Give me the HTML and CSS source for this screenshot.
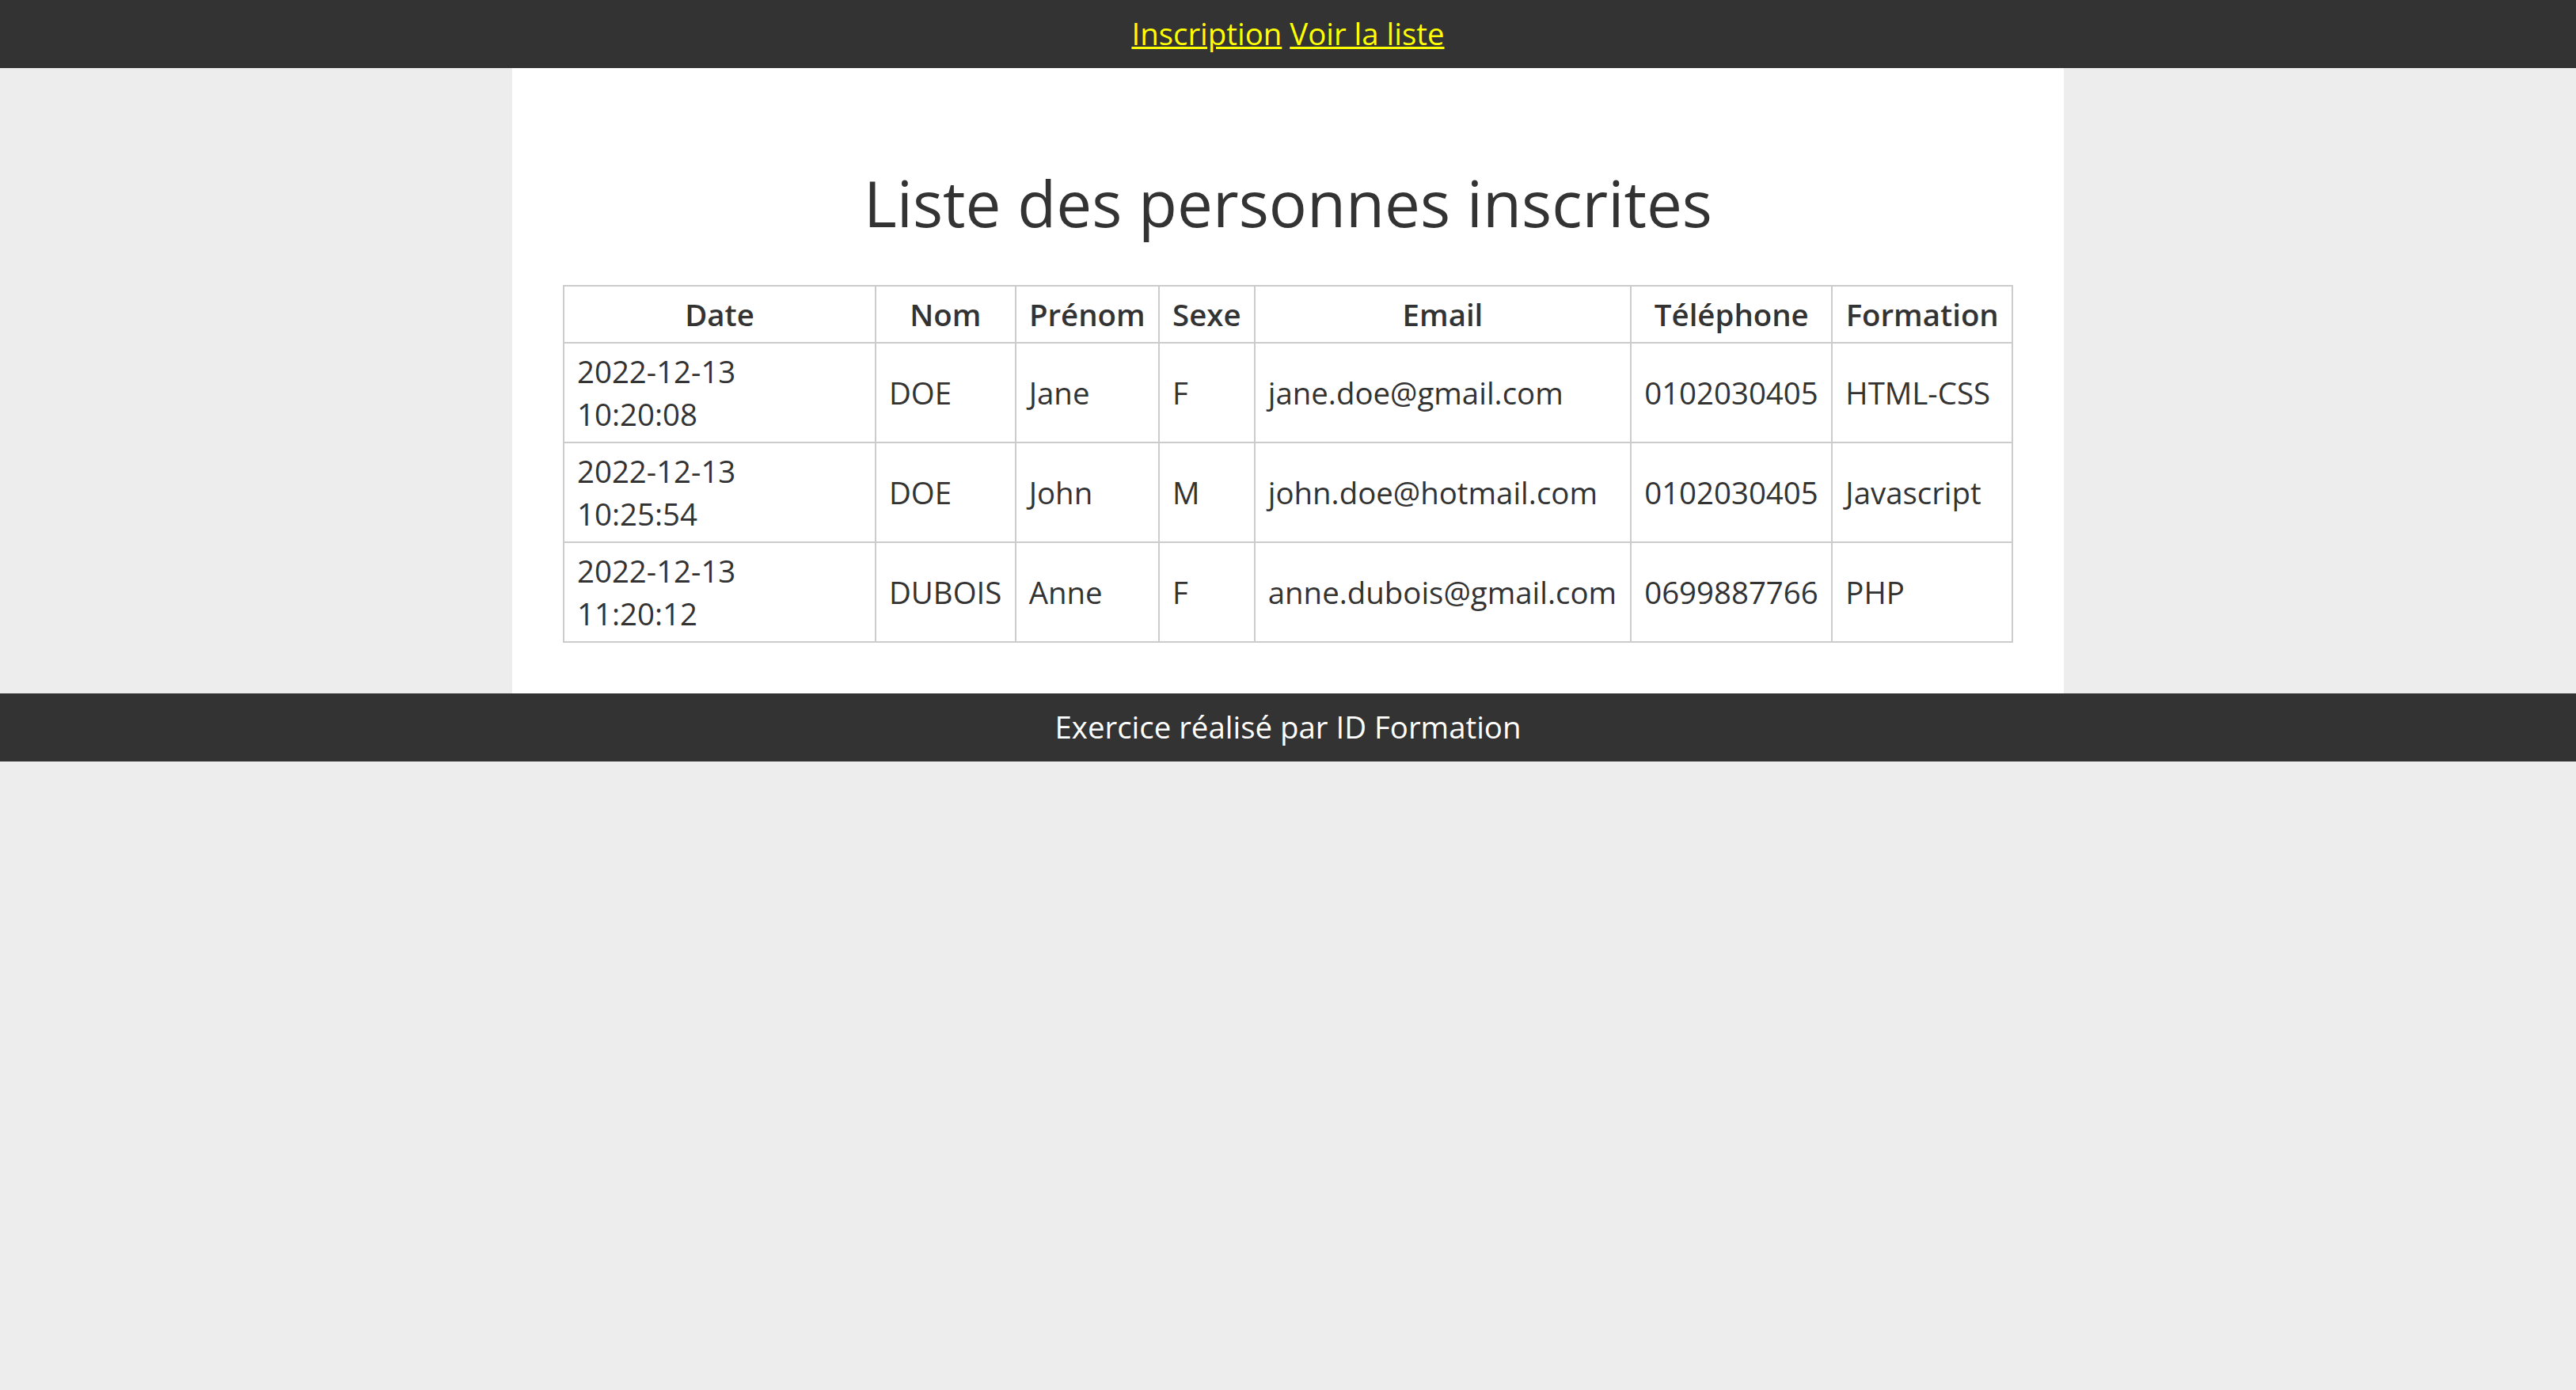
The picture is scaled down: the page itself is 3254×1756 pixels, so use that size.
FILE: index.html
```html
<!DOCTYPE html>
<html lang="fr">
<head>
<meta charset="utf-8">
<title>Liste des personnes inscrites</title>
<link rel="stylesheet" href="styles.css">
</head>
<body>
<header class="site-header">
  <nav class="nav"><a href="#">Inscription</a> <a href="#">Voir la liste</a></nav>
</header>
<main class="container">
  <h1 class="title">Liste des personnes inscrites</h1>
  <table class="list">
    <thead>
      <tr><th class="col-date">Date</th><th>Nom</th><th>Prénom</th><th>Sexe</th><th>Email</th><th>Téléphone</th><th>Formation</th></tr>
    </thead>
    <tbody>
      <tr><td>2022-12-13<br>10:20:08</td><td>DOE</td><td>Jane</td><td>F</td><td>jane.doe@gmail.com</td><td>0102030405</td><td>HTML-CSS</td></tr>
      <tr><td>2022-12-13<br>10:25:54</td><td>DOE</td><td>John</td><td>M</td><td>john.doe@hotmail.com</td><td>0102030405</td><td>Javascript</td></tr>
      <tr><td>2022-12-13<br>11:20:12</td><td>DUBOIS</td><td>Anne</td><td>F</td><td>anne.dubois@gmail.com</td><td>0699887766</td><td>PHP</td></tr>
    </tbody>
  </table>
</main>
<footer class="site-footer">Exercice réalisé par ID Formation</footer>
</body>
</html>
```
FILE: styles.css
```css
html, body {
  margin: 0;
  padding: 0;
}
body {
  background: #ededed;
  color: #333333;
  font-family: "Open Sans", "DejaVu Sans", sans-serif;
  font-size: 38.4px;
  line-height: 1.4;
}
.site-header {
  background: #333333;
  text-align: center;
  padding: 16px 0;
}
.nav a {
  color: #ffff00;
  text-decoration: underline;
}
.container {
  width: 1960px;
  box-sizing: border-box;
  margin: 0 auto;
  background: #ffffff;
  padding: 64px;
}
.title {
  font-size: 80px;
  font-weight: 400;
  line-height: 1.4;
  margin: 50px 0 48px;
  text-align: center;
}
.list {
  width: 100%;
  border-collapse: collapse;
  line-height: 54px;
}
.list th, .list td {
  border: 2px solid #cccccc;
  padding: 8px 16px;
}
.list th {
  font-weight: 600;
  text-align: center;
}
.list .col-date {
  width: 360px;
}
.list td {
  text-align: left;
}
.site-footer {
  background: #333333;
  color: #ffffff;
  text-align: center;
  padding: 16px 0;
}
```
